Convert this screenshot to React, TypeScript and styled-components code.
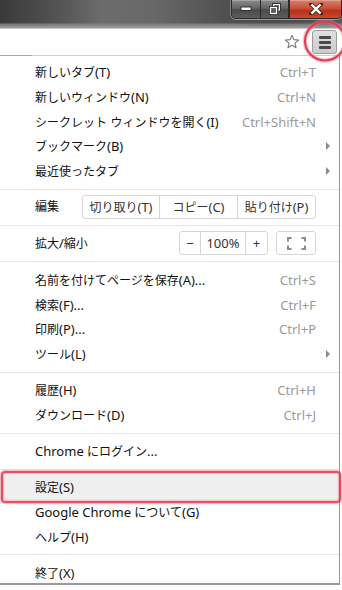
import React from "react";
import styled, { createGlobalStyle } from "styled-components";

const GlobalStyle = createGlobalStyle`
  html, body { margin: 0; padding: 0; background: #fff; }
  body {
    font-family: "Noto Sans", "Noto Sans CJK JP", sans-serif;
    font-size: 12px;
    color: #111;
  }
`;

const Screen = styled.div`
  position: relative;
  width: 342px;
  height: 590px;
  overflow: hidden;
  background: #fff;
`;

const TitleBar = styled.div`
  height: 28px;
  display: flex;
  justify-content: flex-end;
  align-items: flex-start;
  background:
    linear-gradient(180deg, rgba(120,120,120,0) 0%, rgba(120,120,120,0) 80%, #7e7e7e 88%, #9c9c9c 100%),
    linear-gradient(90deg, #3a3a3a 0%, #4b4b4b 12%, #6c6c6c 30%, #686868 45%, #515151 65%, #4a4a4a 80%, #575757 100%);
`;

const Controls = styled.div`
  display: flex;
  height: 18px;
  border: 1px solid #2a2a2a;
  border-top: none;
  border-radius: 0 0 5px 5px;
  overflow: hidden;
  box-shadow: 0 1px 0 rgba(220, 220, 220, 0.55), -1px 0 0 rgba(220, 220, 220, 0.35);
`;

const CtlButton = styled.div<{ $w: number; $close?: boolean }>`
  width: ${(p) => p.$w}px;
  display: flex;
  align-items: center;
  justify-content: center;
  border-left: ${(p) => (p.$close ? "1px solid #2a2a2a" : "none")};
  border-right: ${(p) => (p.$close ? "none" : "1px solid #2a2a2a")};
  background: ${(p) =>
    p.$close
      ? "linear-gradient(180deg, #d98070 0%, #c8503a 45%, #b8301a 60%, #c94a30 100%)"
      : "linear-gradient(180deg, #8a8a8a 0%, #666 45%, #4a4a4a 55%, #5c5c5c 100%)"};
  box-shadow: inset 0 1px 0 rgba(255, 255, 255, 0.25);
`;

const Toolbar = styled.div`
  height: 26px;
  border-top: 1px solid #c8c8c8;
  border-bottom: 1px solid #cfcfcf;
  background: #fff;
  display: flex;
  justify-content: flex-end;
  align-items: center;
  gap: 12px;
  padding-right: 5px;
  position: relative;
`;

const TabStub = styled.div`
  position: absolute;
  left: 0;
  bottom: -1px;
  width: 32px;
  height: 1px;
  background: #a8a8a8;
`;

const MenuButton = styled.div`
  width: 23px;
  height: 22px;
  border: 1px solid #9c9c9c;
  border-radius: 3px;
  background: linear-gradient(180deg, #e0e0e0 0%, #cbcbcb 100%);
  display: flex;
  flex-direction: column;
  align-items: center;
  justify-content: center;
  gap: 2px;
`;

const Bar = styled.div`
  width: 12px;
  height: 3px;
  border-radius: 1px;
  background: #4a4a4a;
`;

const Menu = styled.div`
  position: relative;
  width: 340px;
  height: 529px;
  box-sizing: border-box;
  background: #fff;
  border-right: 1px solid #9a9a9a;
  border-bottom: 2px solid #9a9a9a;
  padding-top: 3.6px;
`;

const Item = styled.div<{ $active?: boolean }>`
  position: relative;
  height: 24.8px;
  display: flex;
  align-items: center;
  justify-content: space-between;
  padding: 0 23px 0 35px;
  background: ${(p) => (p.$active ? "#efefef" : "transparent")};
  white-space: nowrap;
`;

const Label = styled.span`
  color: #111;
`;

const Shortcut = styled.span`
  color: #9a9a9a;
`;

const Latin = styled.span`
  font-size: 13px;
`;

const Arrow = styled.span`
  width: 0;
  height: 0;
  margin-right: -14px;
  border-left: 4px solid #8a8a8a;
  border-top: 4px solid transparent;
  border-bottom: 4px solid transparent;
`;

const Separator = styled.div`
  height: 1px;
  background: #e6e6e6;
  margin: 5px 0 5.3px;
`;

const ControlRow = styled.div`
  height: 25px;
  display: flex;
  align-items: flex-start;
  justify-content: space-between;
  padding: 0 23px 0 35px;
`;

const RowLabel = styled.span`
  line-height: 24px;
  color: #111;
`;

const Right = styled.div`
  display: flex;
  gap: 8px;
`;

const Group = styled.div`
  display: flex;
  height: 24px;
  box-sizing: border-box;
  border: 1px solid #d6d6d6;
  border-radius: 3px;
`;

const Seg = styled.div<{ $w: number }>`
  width: ${(p) => p.$w}px;
  display: flex;
  align-items: center;
  justify-content: center;
  color: #333;
  white-space: nowrap;
  & + & {
    border-left: 1px solid #d6d6d6;
  }
`;

const Highlight = styled.div`
  position: absolute;
  left: 1px;
  right: -2px;
  top: -4px;
  bottom: -3px;
  border: 2px solid rgba(228, 48, 72, 0.85);
  border-radius: 4px;
  box-shadow: 0 0 1.5px 1px rgba(240, 110, 130, 0.55), inset 0 0 1.5px 1px rgba(240, 110, 130, 0.5);
  pointer-events: none;
`;

const CircleMark = styled.svg`
  position: absolute;
  left: 300px;
  top: 17px;
`;

const Mixed = ({ text }: { text: string }) => (
  <>
    {text.split(/([\u3000-\u9fff\uff00-\uffef]+)/).map((part, i) =>
      !part ? null : /[\u3000-\u9fff\uff00-\uffef]/.test(part) ? (
        <React.Fragment key={i}>{part}</React.Fragment>
      ) : (
        <Latin key={i}>{part}</Latin>
      )
    )}
  </>
);

type Entry =
  | { kind: "item"; label: string; shortcut?: string; sub?: boolean; active?: boolean }
  | { kind: "sep" }
  | { kind: "edit" }
  | { kind: "zoom" };

const entries: Entry[] = [
  { kind: "item", label: "新しいタブ(T)", shortcut: "Ctrl+T" },
  { kind: "item", label: "新しいウィンドウ(N)", shortcut: "Ctrl+N" },
  { kind: "item", label: "シークレット ウィンドウを開く(I)", shortcut: "Ctrl+Shift+N" },
  { kind: "item", label: "ブックマーク(B)", sub: true },
  { kind: "item", label: "最近使ったタブ", sub: true },
  { kind: "sep" },
  { kind: "edit" },
  { kind: "sep" },
  { kind: "zoom" },
  { kind: "sep" },
  { kind: "item", label: "名前を付けてページを保存(A)...", shortcut: "Ctrl+S" },
  { kind: "item", label: "検索(F)...", shortcut: "Ctrl+F" },
  { kind: "item", label: "印刷(P)...", shortcut: "Ctrl+P" },
  { kind: "item", label: "ツール(L)", sub: true },
  { kind: "sep" },
  { kind: "item", label: "履歴(H)", shortcut: "Ctrl+H" },
  { kind: "item", label: "ダウンロード(D)", shortcut: "Ctrl+J" },
  { kind: "sep" },
  { kind: "item", label: "Chrome にログイン..." },
  { kind: "sep" },
  { kind: "item", label: "設定(S)", active: true },
  { kind: "item", label: "Google Chrome について(G)" },
  { kind: "item", label: "ヘルプ(H)" },
  { kind: "sep" },
  { kind: "item", label: "終了(X)" },
];

const Star = () => (
  <svg width="16" height="16" viewBox="0 0 16 16">
    <path
      d="M8 1.2 L9.9 5.6 L14.6 6 L11 9.1 L12.1 13.8 L8 11.3 L3.9 13.8 L5 9.1 L1.4 6 L6.1 5.6 Z"
      fill="#fff"
      stroke="#7a7a7a"
      strokeWidth="1.1"
      strokeLinejoin="round"
    />
  </svg>
);

const FullscreenIcon = () => (
  <svg width="19" height="13" viewBox="0 0 19 13">
    <g fill="none" stroke="#8c8c8c" strokeWidth="2">
      <path d="M1 4.5 V1 H4.5" />
      <path d="M14.5 1 H18 V4.5" />
      <path d="M1 8.5 V12 H4.5" />
      <path d="M14.5 12 H18 V8.5" />
    </g>
  </svg>
);

const MinIcon = () => (
  <svg width="12" height="6" viewBox="0 0 12 6">
    <rect x="1" y="1" width="10" height="3.5" fill="#fff" stroke="#333" strokeWidth="1" />
  </svg>
);

const RestoreIcon = () => (
  <svg width="12" height="12" viewBox="0 0 12 12">
    <rect x="3.5" y="0.5" width="8" height="7.5" fill="none" stroke="#333" strokeWidth="1" />
    <rect x="4.5" y="1.5" width="6" height="5.5" fill="none" stroke="#fff" strokeWidth="1" />
    <rect x="0.5" y="3.5" width="8" height="8" fill="#5a5a5a" stroke="#333" strokeWidth="1" />
    <rect x="1.5" y="4.5" width="6" height="6" fill="#5a5a5a" stroke="#fff" strokeWidth="1.2" />
  </svg>
);

const CloseIcon = () => (
  <svg width="14" height="12" viewBox="0 0 14 12">
    <path d="M2 1 L12 11 M12 1 L2 11" stroke="#4a1a10" strokeWidth="4" strokeLinecap="square" />
    <path d="M2.4 1.4 L11.6 10.6 M11.6 1.4 L2.4 10.6" stroke="#fff" strokeWidth="2.4" />
  </svg>
);

export default function App() {
  return (
    <Screen>
      <GlobalStyle />
      <TitleBar>
        <Controls>
          <CtlButton $w={28}>
            <MinIcon />
          </CtlButton>
          <CtlButton $w={27}>
            <RestoreIcon />
          </CtlButton>
          <CtlButton $w={51} $close>
            <CloseIcon />
          </CtlButton>
        </Controls>
      </TitleBar>
      <Toolbar>
        <TabStub />
        <Star />
        <MenuButton>
          <Bar />
          <Bar />
          <Bar />
        </MenuButton>
      </Toolbar>
      <Menu>
        {entries.map((e, i) => {
          if (e.kind === "sep") return <Separator key={i} />;
          if (e.kind === "edit")
            return (
              <ControlRow key={i}>
                <RowLabel>編集</RowLabel>
                <Group>
                  <Seg $w={76}><Mixed text="切り取り(T)" /></Seg>
                  <Seg $w={77}><Mixed text="コピー(C)" /></Seg>
                  <Seg $w={77}><Mixed text="貼り付け(P)" /></Seg>
                </Group>
              </ControlRow>
            );
          if (e.kind === "zoom")
            return (
              <ControlRow key={i}>
                <RowLabel>
                  <Mixed text="拡大/縮小" />
                </RowLabel>
                <Right>
                  <Group>
                    <Seg $w={20}><Latin>−</Latin></Seg>
                    <Seg $w={44}><Latin>100%</Latin></Seg>
                    <Seg $w={21}><Latin>+</Latin></Seg>
                  </Group>
                  <Group>
                    <Seg $w={38}>
                      <FullscreenIcon />
                    </Seg>
                  </Group>
                </Right>
              </ControlRow>
            );
          return (
            <Item key={i} $active={e.active}>
              <Label>
                <Mixed text={e.label} />
              </Label>
              {e.shortcut && (
                <Shortcut>
                  <Latin>{e.shortcut}</Latin>
                </Shortcut>
              )}
              {e.sub && <Arrow />}
              {e.active && <Highlight />}
            </Item>
          );
        })}
      </Menu>
      <CircleMark width="50" height="48" viewBox="0 0 50 48">
        <ellipse cx="25" cy="24" rx="20" ry="19.5" fill="none" stroke="rgba(240,120,135,0.45)" strokeWidth="4.5" />
        <ellipse cx="25" cy="24" rx="20" ry="19.5" fill="none" stroke="#e23a4e" strokeWidth="2" />
      </CircleMark>
    </Screen>
  );
}
